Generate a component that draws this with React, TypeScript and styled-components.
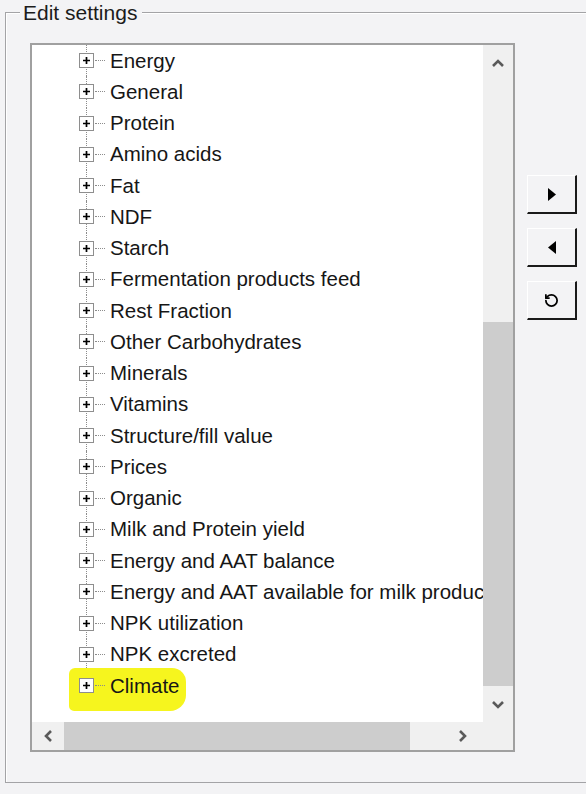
import styled, { createGlobalStyle } from "styled-components";
import { RotateCcw } from "lucide-react";

const GlobalStyle = createGlobalStyle`
  html, body {
    margin: 0;
    padding: 0;
    background: #f3f3f5;
    overflow: hidden;
  }
  body {
    font-family: "Liberation Sans", Arial, sans-serif;
    color: #1c1c1c;
  }
`;

const items = [
  "Energy",
  "General",
  "Protein",
  "Amino acids",
  "Fat",
  "NDF",
  "Starch",
  "Fermentation products feed",
  "Rest Fraction",
  "Other Carbohydrates",
  "Minerals",
  "Vitamins",
  "Structure/fill value",
  "Prices",
  "Organic",
  "Milk and Protein yield",
  "Energy and AAT balance",
  "Energy and AAT available for milk production",
  "NPK utilization",
  "NPK excreted",
  "Climate",
];

function Chevron({ dir }: { dir: "up" | "down" | "left" | "right" }) {
  const pts = {
    up: "1,7 6,2 11,7",
    down: "1,2 6,7 11,2",
    left: "7,1 2,6 7,11",
    right: "2,1 7,6 2,11",
  }[dir];
  const vertical = dir === "up" || dir === "down";
  return (
    <svg width={vertical ? 12 : 9} height={vertical ? 9 : 12} viewBox={vertical ? "0 0 12 9" : "0 0 9 12"}>
      <polyline points={pts} fill="none" stroke="#5a5a5a" strokeWidth="2.6" />
    </svg>
  );
}

function PlusBox() {
  return (
    <Expander>
      <svg width="9" height="9" viewBox="0 0 9 9">
        <path d="M1 4.5h7M4.5 1v7" stroke="#000" strokeWidth="1.7" />
      </svg>
    </Expander>
  );
}

export default function App() {
  return (
    <>
      <GlobalStyle />
      <GroupBox>
        <Legend>Edit settings</Legend>
        <TreeBox>
          <TreeContent>
            {items.map((name, i) => (
              <Row key={name} last={i === items.length - 1}>
                {name === "Climate" && <Marker />}
                <PlusBox />
                <Dots />
                <Label>{name}</Label>
              </Row>
            ))}
          </TreeContent>
          <VScroll>
            <ArrowCell>
              <Chevron dir="up" />
            </ArrowCell>
            <VTrack>
              <VThumb />
            </VTrack>
            <ArrowCell>
              <Chevron dir="down" />
            </ArrowCell>
          </VScroll>
          <HScroll>
            <HArrowCell>
              <Chevron dir="left" />
            </HArrowCell>
            <HThumb />
            <HTrack>
              <Chevron dir="right" />
            </HTrack>
          </HScroll>
          <Corner />
        </TreeBox>
        <ButtonColumn>
          <ToolButton>
            <svg width="8" height="13" viewBox="0 0 8 13">
              <polygon points="0,0 8,6.5 0,13" fill="#000" />
            </svg>
          </ToolButton>
          <ToolButton>
            <svg width="8" height="13" viewBox="0 0 8 13">
              <polygon points="8,0 0,6.5 8,13" fill="#000" />
            </svg>
          </ToolButton>
          <ToolButton>
            <RotateCcw size={15} strokeWidth={2.8} color="#000" />
          </ToolButton>
        </ButtonColumn>
      </GroupBox>
    </>
  );
}

const GroupBox = styled.div`
  position: relative;
  box-sizing: border-box;
  margin: 12px 0 0 5px;
  width: 640px;
  height: 771px;
  border: 1px solid #a3a3a6;
  box-shadow: inset 1px 1px 0 #ffffff, 1px 1px 0 #ffffff;
  padding: 30px 0 0 24px;
  display: flex;
  align-items: flex-start;
  gap: 12px;
`;

const Legend = styled.span`
  position: absolute;
  top: -13px;
  left: 14px;
  padding: 0 5px 0 3px;
  background: #f3f3f5;
  font-size: 21px;
  line-height: 25px;
  color: #1c1c1c;
`;

const TreeBox = styled.div`
  box-sizing: border-box;
  width: 485px;
  height: 709px;
  border: 2px solid #a0a0a0;
  background: #ffffff;
  display: grid;
  grid-template-columns: 451px 30px;
  grid-template-rows: 677px 28px;
`;

const TreeContent = styled.div`
  overflow: hidden;
  padding-left: 47px;
`;

const Row = styled.div<{ last: boolean }>`
  position: relative;
  height: 31.25px;
  display: flex;
  align-items: center;
  white-space: nowrap;

  &::before {
    content: "";
    position: absolute;
    left: 7px;
    top: 0;
    height: ${(p) => (p.last ? "50%" : "100%")};
    border-left: 1px dotted #8c8c8c;
  }
`;

const Marker = styled.span`
  position: absolute;
  left: -10px;
  top: -2px;
  width: 117px;
  height: 43px;
  background: #f6f51e;
  border-radius: 6px 14px 16px 5px;
`;

const Expander = styled.span`
  position: relative;
  z-index: 1;
  box-sizing: border-box;
  width: 15px;
  height: 15px;
  border: 1px solid #8e8e8e;
  background: #ffffff;
  display: inline-flex;
  align-items: center;
  justify-content: center;
  flex-shrink: 0;
`;

const Dots = styled.span`
  position: relative;
  width: 10px;
  margin-left: 1px;
  border-top: 1px dotted #8c8c8c;
  flex-shrink: 0;
`;

const Label = styled.span`
  position: relative;
  margin-left: 5px;
  font-size: 20.5px;
  line-height: 24px;
  color: #161616;
`;

const VScroll = styled.div`
  background: #f0f0f0;
  display: flex;
  flex-direction: column;
`;

const ArrowCell = styled.div`
  height: 36px;
  display: flex;
  align-items: center;
  justify-content: center;
  flex-shrink: 0;
`;

const VTrack = styled.div`
  flex: 1;
  display: flex;
  flex-direction: column;
  justify-content: flex-end;
`;

const VThumb = styled.div`
  height: 364px;
  background: #cdcdcd;
`;

const HScroll = styled.div`
  background: #f0f0f0;
  display: flex;
  align-items: stretch;
`;

const HArrowCell = styled.div`
  width: 32px;
  display: flex;
  align-items: center;
  justify-content: center;
`;

const HThumb = styled.div`
  width: 346px;
  background: #cdcdcd;
`;

const HTrack = styled.div`
  flex: 1;
  display: flex;
  align-items: center;
  justify-content: flex-end;
  padding-right: 16px;
`;

const Corner = styled.div`
  background: #f0f0f0;
`;

const ButtonColumn = styled.div`
  margin-top: 132px;
  display: flex;
  flex-direction: column;
  gap: 14px;
`;

const ToolButton = styled.button`
  box-sizing: border-box;
  width: 50px;
  height: 39px;
  padding: 0;
  background: #f3f3f5;
  border-top: 1px solid #ffffff;
  border-left: 1px solid #ffffff;
  border-right: 2px solid #1a1a1a;
  border-bottom: 2px solid #1a1a1a;
  display: flex;
  align-items: center;
  justify-content: center;
`;
